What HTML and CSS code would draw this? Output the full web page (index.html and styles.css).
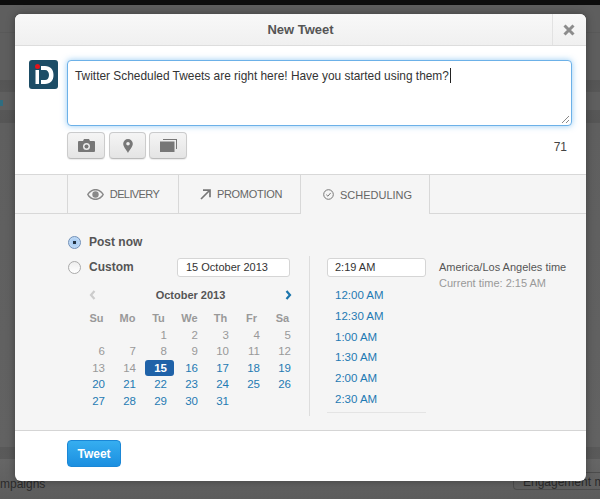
FILE: index.html
```html
<!DOCTYPE html>
<html lang="en">
<head>
    <meta charset="UTF-8">
    <title>New Tweet</title>
    <link rel="stylesheet" href="styles.css">
</head>
<body>
    <div class="topbar"></div>
    <span class="behind-dot"></span>
    <span class="behind-text">mpaigns</span>
    <span class="behind-btn">Engagement m</span>

    <div class="modal">
        <header class="modal-header">
            <h1>New Tweet</h1>
            <div class="close">
                <svg width="12" height="12" viewBox="0 0 12 12"><path d="M1.5 1.5l9 9M10.5 1.5l-9 9" stroke="#8c8c8c" stroke-width="3"/></svg>
            </div>
        </header>

        <div class="compose">
            <div class="avatar">
                <span class="avatar-dot"></span>
                <svg width="29" height="29" viewBox="0 0 29 29"><path fill-rule="evenodd" fill="#fff" d="M6.500 10H10v14H6.500zM12 6h4c5.500 0 8.500 3.500 8.500 9s-3 9-8.500 9h-4v-4h4c2.500 0 4-2 4-5s-1.500-5-4-5h-4z"/></svg>
            </div>
            <div class="compose-main">
                <div class="tweet-box">Twitter Scheduled Tweets are right here! Have you started using them?<span class="caret"></span>
                    <svg class="grip" width="9" height="9" viewBox="0 0 9 9"><path d="M1 8l7-7M5 8l3-3" stroke="#888" fill="none"/></svg>
                </div>
                <div class="compose-tools">
                    <button class="tool tool-photo">
                        <svg width="17" height="13" viewBox="0 0 17 13"><path fill-rule="evenodd" fill="#777" d="M1 2h4l1-2h5l1 2h4a1 1 0 0 1 1 1v9a1 1 0 0 1-1 1H1a1 1 0 0 1-1-1V3a1 1 0 0 1 1-1zm7.500 2a3.500 3.500 0 1 0 0 7 3.500 3.500 0 0 0 0-7z"/><circle cx="8.500" cy="7.500" r="2" fill="#777"/></svg>
                    </button>
                    <button class="tool tool-geo">
                        <svg width="10" height="14" viewBox="0 0 10 14"><path fill-rule="evenodd" fill="#777" d="M5 0a4.800 4.800 0 0 1 4.800 4.800C9.800 8 6.500 11 5 14 3.500 11 .2 8 .2 4.800A4.800 4.800 0 0 1 5 0zm0 3a1.800 1.800 0 1 0 0 3.600A1.800 1.800 0 0 0 5 3z"/></svg>
                    </button>
                    <button class="tool tool-media">
                        <svg width="17" height="13" viewBox="0 0 17 13"><path fill="#777" d="M3 0h14v10h-1V1H3zM0 2.500h14.500V13H0z"/></svg>
                    </button>
                    <span class="counter">71</span>
                </div>
            </div>
        </div>

        <nav class="tabs">
            <a class="tab tab-delivery">
                <svg width="17" height="11" viewBox="0 0 17 11"><path fill-rule="evenodd" fill="#888" d="M8.500 0C12.500 0 15.500 2.500 17 5.500 15.500 8.500 12.500 11 8.500 11S1.500 8.500 0 5.500C1.500 2.500 4.500 0 8.500 0zm0 1.500C5.500 1.500 3 3.300 1.600 5.500 3 7.700 5.500 9.500 8.500 9.500s5.500-1.800 6.900-4C14 3.300 11.500 1.500 8.500 1.500z"/><circle cx="8.500" cy="5.500" r="3.200" fill="#888"/></svg>
                DELIVERY
            </a>
            <a class="tab tab-promotion">
                <svg width="11" height="11" viewBox="0 0 11 11"><path d="M1 10L9.500 1.500M3 1.200h7v7" fill="none" stroke="#777" stroke-width="1.700"/></svg>
                PROMOTION
            </a>
            <a class="tab tab-active">
                <svg width="11" height="11" viewBox="0 0 11 11"><circle cx="5.500" cy="5.500" r="4.800" fill="none" stroke="#777" stroke-width="1"/><path d="M3.300 5.700l1.600 1.500 2.800-3.300" fill="none" stroke="#777" stroke-width="1"/></svg>
                SCHEDULING
            </a>
        </nav>

        <div class="schedule">
            <div class="date-col">
                <label class="radio-row">
                    <span class="radio radio-on"></span>
                    <span class="radio-label">Post now</span>
                </label>
                <div class="radio-row radio-row-custom">
                    <span class="radio"></span>
                    <span class="radio-label">Custom</span>
                    <div class="field field-date">15 October 2013</div>
                </div>
                <div class="calendar">
                    <div class="cal-head">
                        <svg width="7" height="10" viewBox="0 0 7 10"><path d="M5.500 1L2 5l3.500 4" fill="none" stroke="#ccc" stroke-width="2.200"/></svg>
                        <strong>October 2013</strong>
                        <svg width="7" height="10" viewBox="0 0 7 10"><path d="M1.500 1L5 5 1.500 9" fill="none" stroke="#1b75ac" stroke-width="2.200"/></svg>
                    </div>
                    <div class="cal-grid">
                        <b>Su</b><b>Mo</b><b>Tu</b><b>We</b><b>Th</b><b>Fr</b><b>Sa</b>
                        <i></i><i></i><span>1</span><span>2</span><span>3</span><span>4</span><span>5</span>
                        <span>6</span><span>7</span><span>8</span><span>9</span><span>10</span><span>11</span><span>12</span>
                        <span>13</span><span>14</span><a class="today">15</a><a>16</a><a>17</a><a>18</a><a>19</a>
                        <a>20</a><a>21</a><a>22</a><a>23</a><a>24</a><a>25</a><a>26</a>
                        <a>27</a><a>28</a><a>29</a><a>30</a><a>31</a>
                    </div>
                </div>
            </div>
            <div class="time-col">
                <div class="field field-time">2:19 AM</div>
                <ul class="time-list">
                    <li>12:00 AM</li>
                    <li>12:30 AM</li>
                    <li>1:00 AM</li>
                    <li>1:30 AM</li>
                    <li>2:00 AM</li>
                    <li>2:30 AM</li>
                </ul>
            </div>
            <div class="zone-col">
                <p class="zone">America/Los Angeles time</p>
                <p class="current">Current time: 2:15 AM</p>
            </div>
        </div>

        <footer class="modal-footer">
            <button class="tweet-btn">Tweet</button>
        </footer>
    </div>
</body>
</html>
```

FILE: styles.css
```css
* {
    box-sizing: border-box;
    margin: 0;
    padding: 0;
}
html, body {
    height: 499px;
    overflow: hidden;
}
body {
    position: relative;
    background: linear-gradient(#5e5e5e 0, #5e5e5e 32px, #545454 32px, #5e5e5e 33px, #5e5e5e 80px, #555 80px, #575757 92px, #5f5f5f 92px, #5f5f5f 110px, #575757 110px, #565656 122px, #4e4e4e 122px, #5f5f5f 123px, #626262 447px, #595959 447px, #5a5a5a 459px, #666 459px, #5c5c5c 499px);
    font-family: 'Liberation Sans', Arial, sans-serif;
    font-size: 12px;
    color: #555;
    padding: 14px 14px 18px 15px;
}
.topbar {
    position: absolute;
    left: 0;
    top: 0;
    width: 100%;
    height: 5px;
    background: #0d0d0d;
}
.behind-dot {
    position: absolute;
    left: 0;
    top: 100px;
    width: 3px;
    height: 6px;
    background: #2f6d80;
}
.behind-text {
    position: absolute;
    left: 0;
    top: 477px;
    color: #2b2b2b;
    font-size: 12px;
}
.behind-btn {
    position: absolute;
    left: 513px;
    top: 472px;
    padding: 2px 0 0 9px;
    width: 87px;
    height: 18px;
    border: 1px solid #4c4c4c;
    border-right: none;
    border-radius: 4px 0 0 4px;
    color: #2b2b2b;
    font-size: 12px;
    white-space: nowrap;
}
.modal {
    position: relative;
    width: 571px;
    height: 467px;
    background: #fff;
    border-radius: 6px;
    box-shadow: 0 0 8px rgba(0, 0, 0, 0.35);
    overflow: hidden;
    display: flex;
    flex-direction: column;
}
.modal-header {
    height: 32px;
    background: linear-gradient(#f8f8f8, #f0f0f0);
    border-bottom: 1px solid #ddd;
    display: flex;
    align-items: center;
    position: relative;
}
.modal-header h1 {
    width: 100%;
    text-align: center;
    font-size: 13px;
    line-height: 31px;
    color: #555;
}
.close {
    position: absolute;
    right: 0;
    top: 0;
    width: 34px;
    height: 31px;
    padding-right: 2px;
    border-left: 1px solid #e2e2e2;
    display: flex;
    align-items: center;
    justify-content: center;
}
.compose {
    height: 128px;
    padding: 14px 14px 0 14px;
    display: flex;
    gap: 9px;
}
.avatar {
    position: relative;
    width: 29px;
    height: 29px;
    background: #1d4d66;
    border-radius: 3px;
    flex: none;
}
.avatar svg {
    display: block;
}
.avatar-dot {
    position: absolute;
    left: 6px;
    top: 4px;
    width: 5px;
    height: 5px;
    border-radius: 50%;
    background: #e3141c;
}
.compose-main {
    flex: 1;
}
.tweet-box {
    position: relative;
    height: 66px;
    padding: 6px 7px;
    border: 1px solid #6cb1e8;
    border-radius: 4px;
    box-shadow: 0 0 6px rgba(82, 168, 236, 0.6);
    font-size: 11.900px;
    line-height: 18px;
    color: #333;
    background: #fff;
}
.caret {
    display: inline-block;
    width: 1px;
    height: 15px;
    margin-left: 1px;
    background: #222;
    vertical-align: -3px;
}
.grip {
    position: absolute;
    right: 1px;
    bottom: 1px;
}
.compose-tools {
    display: flex;
    align-items: center;
    margin-top: 6px;
}
.tool {
    width: 38px;
    height: 27px;
    border: 1px solid #ccc;
    border-bottom-color: #bbb;
    border-radius: 4px;
    background: linear-gradient(#f5f5f5, #e4e4e4);
    box-shadow: 0 1px 1px rgba(0, 0, 0, 0.08);
    display: flex;
    align-items: center;
    justify-content: center;
}
.tool-geo {
    width: 37px;
    margin: 0 3px 0 4px;
}
.counter {
    margin-left: auto;
    padding: 3px 5px 0 0;
    font-size: 12px;
    color: #444;
}
.tabs {
    height: 40px;
    padding-left: 52px;
    display: flex;
    background: #f5f5f5;
    border-top: 1px solid #d8d8d8;
    border-bottom: 1px solid #d8d8d8;
}
.tab {
    display: flex;
    align-items: center;
    justify-content: center;
    gap: 6px;
    border-left: 1px solid #d8d8d8;
    color: #666;
    font-size: 11px;
}
.tab-delivery {
    width: 111px;
    letter-spacing: -0.6px;
}
.tab-promotion {
    width: 122px;
    padding-left: 3px;
    letter-spacing: -0.3px;
}
.tab-active {
    width: 130px;
    height: 39px;
    padding-left: 5px;
    border-right: 1px solid #d8d8d8;
    background: #f5f5f5;
}
.schedule {
    height: 216px;
    background: #f5f5f5;
    display: flex;
    padding: 18px 0 0 52px;
}
.date-col {
    width: 242px;
}
.radio-row {
    display: flex;
    align-items: center;
    width: 223px;
    height: 20px;
}
.radio-row-custom {
    margin-top: 5px;
}
.radio {
    width: 13px;
    height: 13px;
    border-radius: 50%;
    border: 1px solid #aaa;
    background: linear-gradient(#eee, #fff);
    margin-right: 8px;
    margin-left: 1px;
    flex: none;
}
.radio-on {
    border-color: #6f8fb8;
    background: radial-gradient(circle, #234 0, #234 1.500px, #a9cdf3 2px, #cfe2f7 100%);
}
.radio-label {
    font-weight: bold;
    color: #555;
    font-size: 12px;
}
.field {
    height: 19px;
    line-height: 17px;
    background: #fff;
    border: 1px solid #d5d5d5;
    border-radius: 3px;
    color: #333;
    font-size: 11px;
}
.field-date {
    width: 113px;
    margin-left: auto;
    padding-left: 8px;
}
.calendar {
    margin-top: 9px;
    margin-left: 14px;
    width: 216px;
}
.cal-head {
    height: 18px;
    display: flex;
    align-items: center;
    justify-content: space-between;
    padding: 0 5px 0 8px;
}
.cal-head strong {
    font-size: 11px;
    color: #555;
}
.cal-grid {
    display: grid;
    grid-template-columns: repeat(7, 31px);
    grid-auto-rows: 16.500px;
    margin-top: 6px;
    line-height: 16.500px;
    font-size: 11.500px;
    text-align: right;
}
.cal-grid b {
    text-align: center;
    color: #999;
    font-size: 11px;
}
.cal-grid span, .cal-grid a {
    padding-right: 7px;
}
.cal-grid span {
    color: #999;
}
.cal-grid a {
    color: #1f7ab3;
}
.cal-grid .today {
    background: #1f62a8;
    color: #fff;
    font-weight: bold;
    border-radius: 3px;
    margin-left: 2px;
}
.time-col {
    width: 130px;
    height: 160px;
    margin-top: 24px;
    padding: 2px 13px 0 17px;
    border-left: 1px solid #ddd;
}
.field-time {
    width: 100%;
    padding-left: 7px;
}
.time-list {
    list-style: none;
    padding: 8px 0 3px 8px;
    border-bottom: 1px solid #e4e4e4;
    height: 136px;
    color: #1f7ab3;
    font-size: 11.500px;
}
.time-list li {
    height: 20.800px;
    line-height: 20.800px;
}
.zone-col {
    padding-top: 27px;
}
.zone {
    color: #555;
    font-size: 11px;
    line-height: 16px;
    white-space: nowrap;
}
.current {
    color: #999;
    font-size: 11px;
    line-height: 16px;
    white-space: nowrap;
}
.modal-footer {
    flex: 1;
    border-top: 1px solid #d5d5d5;
    padding: 9px 0 0 52px;
}
.tweet-btn {
    width: 54px;
    height: 27px;
    border: 1px solid #1b87d6;
    border-radius: 4px;
    background: linear-gradient(#36aef0, #1b8fe0);
    color: #fff;
    font-family: inherit;
    font-weight: bold;
    font-size: 12px;
}
```
